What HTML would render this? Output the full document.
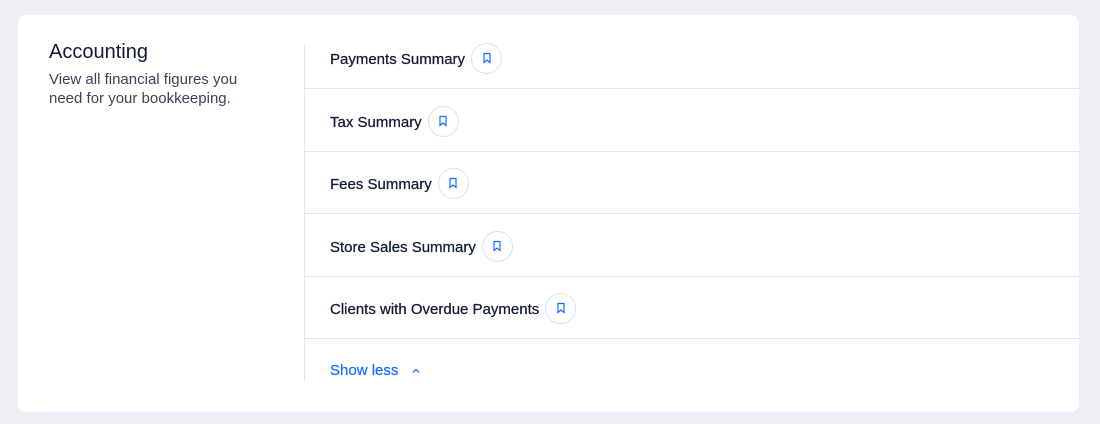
<!DOCTYPE html>
<html><head><style>
body{margin:0;width:1100px;height:424px;background:#eeeff4;font-family:"Liberation Sans",sans-serif;position:relative;overflow:hidden}
.card{position:absolute;left:18px;top:15px;width:1061px;height:397px;background:#fff;border-radius:8px}
.t{position:absolute;left:49px;top:41px;font-size:20px;color:#0f1b33}
.d{position:absolute;left:49px;top:70px;font-size:15px;line-height:19px;color:#3b4257;width:210px}
.v{position:absolute;left:304px;top:44px;width:1px;height:337px;background:#e2e6ee}
.row{position:absolute;left:305px;width:774px;height:62px;border-bottom:1px solid #e2e6ee;display:flex;align-items:center}
.row span{margin-left:25px;font-size:15px;color:#0f1b33;position:relative;top:2px;-webkit-text-stroke:0.25px #0f1b33}
.b{margin-left:6px;width:29px;height:29px;border:1px solid #d6e2fb;border-radius:50%;display:flex;align-items:center;justify-content:center;position:relative;top:1px}
.s{position:absolute;left:330px;top:362px;font-size:15px;color:#116dff;-webkit-text-stroke:0.2px #116dff}
</style></head><body>
<div class="card"></div>
<div class="t">Accounting</div>
<div class="d">View all financial figures you need for your bookkeeping.</div>
<div class="v"></div>
<div class="row" style="top:26px"><span>Payments Summary</span><div class="b"><svg width="12" height="12" viewBox="0 0 12 12"><path d="M3 1.5h6v9l-3-2.5-3 2.5z" fill="none" stroke="#116dff" stroke-width="1.2"/></svg></div></div>
<div class="row" style="top:89px"><span>Tax Summary</span><div class="b"><svg width="12" height="12" viewBox="0 0 12 12"><path d="M3 1.5h6v9l-3-2.5-3 2.5z" fill="none" stroke="#116dff" stroke-width="1.2"/></svg></div></div>
<div class="row" style="top:151px"><span>Fees Summary</span><div class="b"><svg width="12" height="12" viewBox="0 0 12 12"><path d="M3 1.5h6v9l-3-2.5-3 2.5z" fill="none" stroke="#116dff" stroke-width="1.2"/></svg></div></div>
<div class="row" style="top:214px"><span>Store Sales Summary</span><div class="b"><svg width="12" height="12" viewBox="0 0 12 12"><path d="M3 1.5h6v9l-3-2.5-3 2.5z" fill="none" stroke="#116dff" stroke-width="1.2"/></svg></div></div>
<div class="row" style="top:276px"><span>Clients with Overdue Payments</span><div class="b"><svg width="12" height="12" viewBox="0 0 12 12"><path d="M3 1.5h6v9l-3-2.5-3 2.5z" fill="none" stroke="#116dff" stroke-width="1.2"/></svg></div></div>
<div class="s">Show less <svg width="10" height="8" viewBox="0 0 10 8" style="margin-left:8px"><path d="M2 5.5l3-3 3 3" fill="none" stroke="#116dff" stroke-width="1.2"/></svg></div>
</body></html>
